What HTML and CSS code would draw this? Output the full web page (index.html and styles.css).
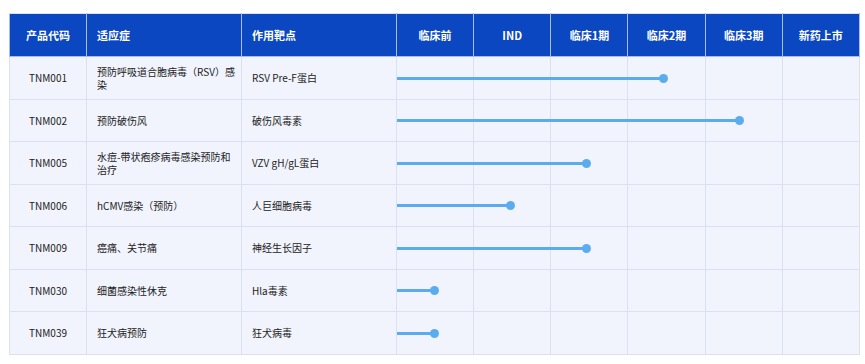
FILE: index.html
```html
<!DOCTYPE html>
<html lang="zh">
<head>
<meta charset="utf-8">
<link rel="stylesheet" href="styles.css">
</head>
<body>
<table class="pipeline">
  <colgroup>
    <col class="c-code"><col class="c-ind"><col class="c-tgt">
    <col class="c-st"><col class="c-st"><col class="c-st"><col class="c-st"><col class="c-st"><col class="c-st">
  </colgroup>
  <thead>
    <tr>
      <th class="center">产品代码</th>
      <th>适应症</th>
      <th>作用靶点</th>
      <th class="center">临床前</th>
      <th class="center">IND</th>
      <th class="center">临床1期</th>
      <th class="center">临床2期</th>
      <th class="center">临床3期</th>
      <th class="center">新药上市</th>
    </tr>
  </thead>
  <tbody>
    <tr>
      <td class="center">TNM001</td>
      <td>预防呼吸道合胞病毒（RSV）感染</td>
      <td>RSV Pre-F蛋白</td>
      <td class="stage"><span class="bar" style="width:350%"></span></td><td></td><td></td><td></td><td></td><td></td>
    </tr>
    <tr>
      <td class="center">TNM002</td>
      <td>预防破伤风</td>
      <td>破伤风毒素</td>
      <td class="stage"><span class="bar" style="width:450%"></span></td><td></td><td></td><td></td><td></td><td></td>
    </tr>
    <tr>
      <td class="center">TNM005</td>
      <td>水痘-带状疱疹病毒感染预防和治疗</td>
      <td>VZV gH/gL蛋白</td>
      <td class="stage"><span class="bar" style="width:250%"></span></td><td></td><td></td><td></td><td></td><td></td>
    </tr>
    <tr>
      <td class="center">TNM006</td>
      <td>hCMV感染（预防）</td>
      <td>人巨细胞病毒</td>
      <td class="stage"><span class="bar" style="width:150%"></span></td><td></td><td></td><td></td><td></td><td></td>
    </tr>
    <tr>
      <td class="center">TNM009</td>
      <td>癌痛、关节痛</td>
      <td>神经生长因子</td>
      <td class="stage"><span class="bar" style="width:250%"></span></td><td></td><td></td><td></td><td></td><td></td>
    </tr>
    <tr>
      <td class="center">TNM030</td>
      <td>细菌感染性休克</td>
      <td>Hla毒素</td>
      <td class="stage"><span class="bar" style="width:50%"></span></td><td></td><td></td><td></td><td></td><td></td>
    </tr>
    <tr>
      <td class="center">TNM039</td>
      <td>狂犬病预防</td>
      <td>狂犬病毒</td>
      <td class="stage"><span class="bar" style="width:50%"></span></td><td></td><td></td><td></td><td></td><td></td>
    </tr>
  </tbody>
</table>
</body>
</html>
```
FILE: styles.css
```css
html, body {
  margin: 0;
  padding: 0;
  background: #ffffff;
}
body {
  padding: 13px 0 0 9px;
  font-family: "Noto Sans CJK SC", "Noto Sans", sans-serif;
}
.pipeline {
  width: 850px;
  table-layout: fixed;
  border-collapse: collapse;
  border: 1px solid #dbe1f0;
}
.c-code { width: 77px; }
.c-ind { width: 155px; }
.c-tgt { width: 155px; }
.c-st { width: 77.17px; }
.pipeline th {
  background: #0a47c0;
  color: #ffffff;
  font-size: 11px;
  font-weight: 700;
  height: 42px;
  padding: 0 10px;
  text-align: left;
  border: 1px solid #a9bbe8;
  border-top-color: #dbe1f0;
}
.pipeline td {
  background: #f1f4fd;
  color: #222222;
  font-size: 10px;
  line-height: 13px;
  height: 41.5px;
  padding: 0 5px 0 10px;
  border: 1px solid #dbe1f0;
  vertical-align: middle;
}
.pipeline th.center, .pipeline td.center {
  text-align: center;
  padding: 0 8px;
}
.pipeline td.stage {
  position: relative;
  padding: 0;
}
.bar {
  position: absolute;
  left: 0;
  top: 50%;
  height: 3px;
  margin-top: -1px;
  background: #5aacef;
  z-index: 1;
}
.bar::after {
  content: "";
  position: absolute;
  right: -4px;
  top: -3px;
  width: 9px;
  height: 9px;
  border-radius: 50%;
  background: #5aacef;
}
```
